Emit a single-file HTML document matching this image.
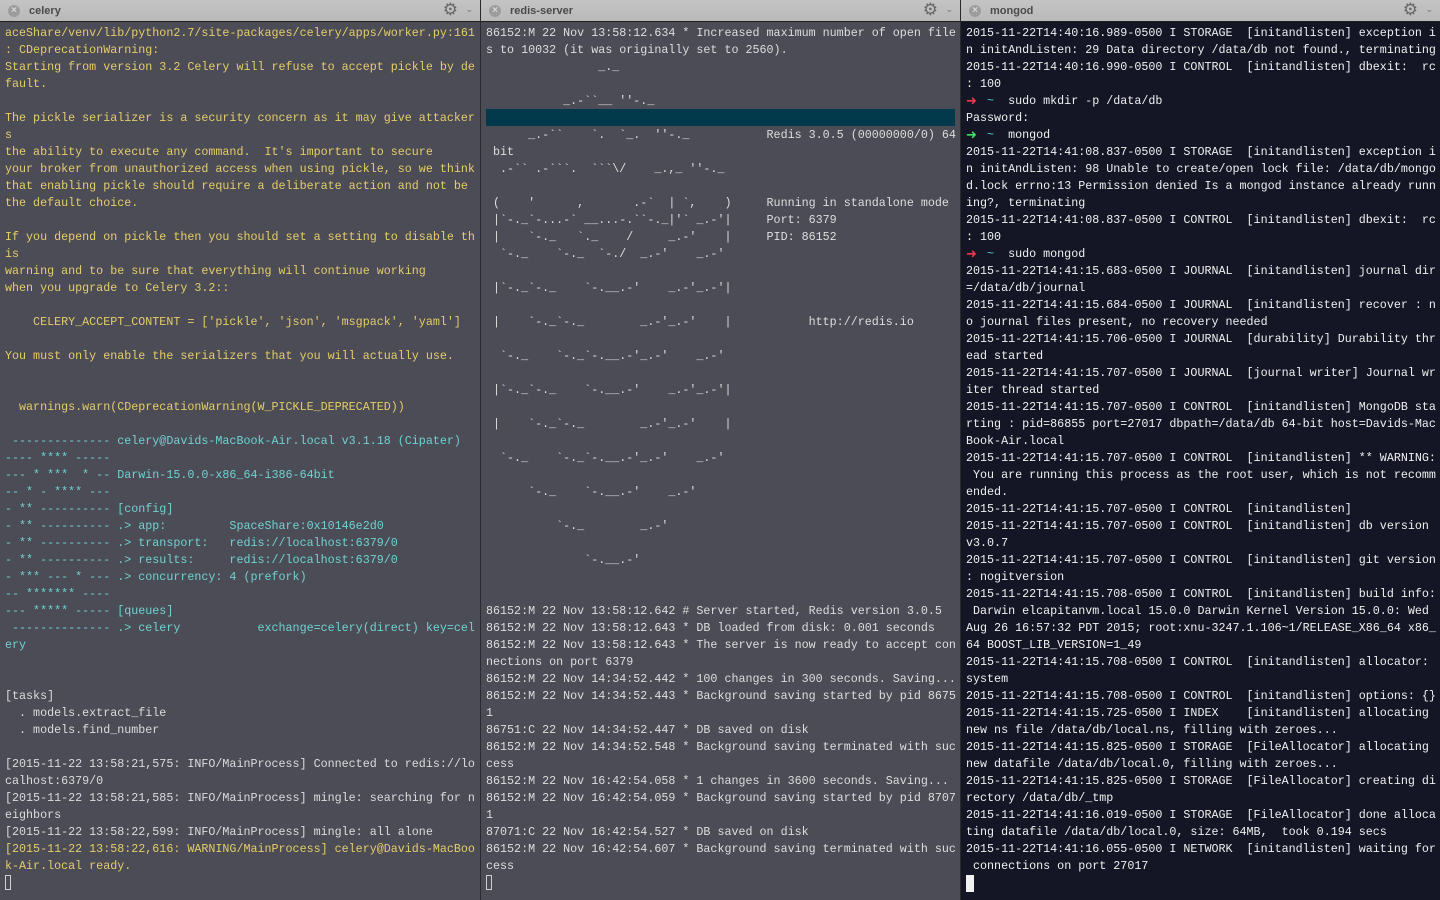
<!DOCTYPE html>
<html><head><meta charset="utf-8">
<style>
html,body{margin:0;padding:0;width:1440px;height:900px;overflow:hidden;background:#4b4c55;}
.pane{position:absolute;top:0;height:900px;overflow:hidden;}
.tab{position:absolute;left:0;right:0;top:0;height:21px;background:linear-gradient(#c4c4c4,#b9b9b9);border-bottom:1px solid #1e1e1e;}
.tab .x{position:absolute;left:8px;top:5px;width:12px;height:12px;border-radius:50%;background:#9c9c9c;color:#d8d8d8;font:bold 10px/12px "Liberation Sans",sans-serif;text-align:center;}
.tab .t{position:absolute;left:29px;top:4px;font:bold 11px/15px "Liberation Sans",sans-serif;color:#4a4a4a;}
.tab .g{position:absolute;right:22px;top:2px;font:17px/17px "DejaVu Sans",sans-serif;color:#666;}
.tab .c{position:absolute;right:7px;top:3px;font:9px/14px "DejaVu Sans",sans-serif;color:#777;}
pre{position:absolute;left:5px;top:25px;margin:0;font-family:"Liberation Mono",monospace;font-size:11.7px;line-height:17px;white-space:pre;}
.y{color:#e5cd6a}.c1{color:#6fd2d2}.w{color:#dcdcdc}
.r{color:#f4364c}.g2{color:#3ee06a}.cy{color:#45d0d0}
.ar{display:inline-block;width:7px;overflow:visible;font:bold 13px/17px "DejaVu Sans",sans-serif;vertical-align:top;}
.cur{display:inline-block;width:6px;height:15px;border:1px solid #cfcfcf;vertical-align:-3px;box-sizing:border-box;}
.curw{display:inline-block;width:8px;height:17px;background:#f2f2f2;vertical-align:-4px;}
</style></head><body>

<div class="pane" style="left:0;width:480px;background:#4b4c55;">
<div class="tab"><div class="x">×</div><div class="t">celery</div><div class="g">⚙</div><div class="c">⌄</div></div>
<pre><span class="y">aceShare/venv/lib/python2.7/site-packages/celery/apps/worker.py:161
: CDeprecationWarning:
Starting from version 3.2 Celery will refuse to accept pickle by de
fault.

The pickle serializer is a security concern as it may give attacker
s
the ability to execute any command.  It's important to secure
your broker from unauthorized access when using pickle, so we think
that enabling pickle should require a deliberate action and not be
the default choice.

If you depend on pickle then you should set a setting to disable th
is
warning and to be sure that everything will continue working
when you upgrade to Celery 3.2::

    CELERY_ACCEPT_CONTENT = ['pickle', 'json', 'msgpack', 'yaml']

You must only enable the serializers that you will actually use.


  warnings.warn(CDeprecationWarning(W_PICKLE_DEPRECATED))
</span><span class="c1">
 -------------- celery@Davids-MacBook-Air.local v3.1.18 (Cipater)
---- **** -----
--- * ***  * -- Darwin-15.0.0-x86_64-i386-64bit
-- * - **** ---
- ** ---------- [config]
- ** ---------- .> app:         SpaceShare:0x10146e2d0
- ** ---------- .> transport:   redis://localhost:6379/0
- ** ---------- .> results:     redis://localhost:6379/0
- *** --- * --- .> concurrency: 4 (prefork)
-- ******* ----
--- ***** ----- [queues]
 -------------- .> celery           exchange=celery(direct) key=cel
ery
</span><span class="w">

[tasks]
  . models.extract_file
  . models.find_number

[2015-11-22 13:58:21,575: INFO/MainProcess] Connected to redis://lo
calhost:6379/0
[2015-11-22 13:58:21,585: INFO/MainProcess] mingle: searching for n
eighbors
[2015-11-22 13:58:22,599: INFO/MainProcess] mingle: all alone
</span><span class="y">[2015-11-22 13:58:22,616: WARNING/MainProcess] celery@Davids-MacBoo
k-Air.local ready.
</span><span class="cur"></span></pre>
</div>

<div style="position:absolute;left:480px;top:0;width:1px;height:900px;background:#2a2a2e;"></div>

<div class="pane" style="left:481px;width:479px;background:#4b4c55;">
<div class="tab"><div class="x">×</div><div class="t">redis-server</div><div class="g">⚙</div><div class="c">⌄</div></div>
<div style="position:absolute;left:5px;top:109px;width:469px;height:17px;background:#023a4c;"></div>
<pre class="w" style="color:#dedede">86152:M 22 Nov 13:58:12.634 * Increased maximum number of open file
s to 10032 (it was originally set to 2560).
                _._

           _.-&#96;&#96;__ ''-._

      _.-&#96;&#96;    &#96;.  &#96;_.  ''-._           Redis 3.0.5 (00000000/0) 64
 bit
  .-&#96;&#96; .-&#96;&#96;&#96;.  &#96;&#96;&#96;\/    _.,_ ''-._

 (    '      ,       .-&#96;  | &#96;,    )     Running in standalone mode
 |&#96;-._&#96;-...-&#96; __...-.&#96;&#96;-._|'&#96; _.-'|     Port: 6379
 |    &#96;-._   &#96;._    /     _.-'    |     PID: 86152
  &#96;-._    &#96;-._  &#96;-./  _.-'    _.-'

 |&#96;-._&#96;-._    &#96;-.__.-'    _.-'_.-'|

 |    &#96;-._&#96;-._        _.-'_.-'    |           http://redis.io

  &#96;-._    &#96;-._&#96;-.__.-'_.-'    _.-'

 |&#96;-._&#96;-._    &#96;-.__.-'    _.-'_.-'|

 |    &#96;-._&#96;-._        _.-'_.-'    |

  &#96;-._    &#96;-._&#96;-.__.-'_.-'    _.-'

      &#96;-._    &#96;-.__.-'    _.-'

          &#96;-._        _.-'

              &#96;-.__.-'


86152:M 22 Nov 13:58:12.642 # Server started, Redis version 3.0.5
86152:M 22 Nov 13:58:12.643 * DB loaded from disk: 0.001 seconds
86152:M 22 Nov 13:58:12.643 * The server is now ready to accept con
nections on port 6379
86152:M 22 Nov 14:34:52.442 * 100 changes in 300 seconds. Saving...
86152:M 22 Nov 14:34:52.443 * Background saving started by pid 8675
1
86751:C 22 Nov 14:34:52.447 * DB saved on disk
86152:M 22 Nov 14:34:52.548 * Background saving terminated with suc
cess
86152:M 22 Nov 16:42:54.058 * 1 changes in 3600 seconds. Saving...
86152:M 22 Nov 16:42:54.059 * Background saving started by pid 8707
1
87071:C 22 Nov 16:42:54.527 * DB saved on disk
86152:M 22 Nov 16:42:54.607 * Background saving terminated with suc
cess
<span class="cur"></span></pre>
</div>

<div style="position:absolute;left:960px;top:0;width:1px;height:900px;background:#2a2a2e;"></div>

<div class="pane" style="left:961px;width:479px;background:#141625;">
<div class="tab"><div class="x">×</div><div class="t">mongod</div><div class="g">⚙</div><div class="c">⌄</div></div>
<pre style="color:#f0f0f0">2015-11-22T14:40:16.989-0500 I STORAGE  [initandlisten] exception i
n initAndListen: 29 Data directory /data/db not found., terminating
2015-11-22T14:40:16.990-0500 I CONTROL  [initandlisten] dbexit:  rc
: 100
<span class="ar r">➜</span>  <span class="cy">~</span>  sudo mkdir -p /data/db
Password:
<span class="ar g2">➜</span>  <span class="cy">~</span>  mongod
2015-11-22T14:41:08.837-0500 I STORAGE  [initandlisten] exception i
n initAndListen: 98 Unable to create/open lock file: /data/db/mongo
d.lock errno:13 Permission denied Is a mongod instance already runn
ing?, terminating
2015-11-22T14:41:08.837-0500 I CONTROL  [initandlisten] dbexit:  rc
: 100
<span class="ar r">➜</span>  <span class="cy">~</span>  sudo mongod
2015-11-22T14:41:15.683-0500 I JOURNAL  [initandlisten] journal dir
=/data/db/journal
2015-11-22T14:41:15.684-0500 I JOURNAL  [initandlisten] recover : n
o journal files present, no recovery needed
2015-11-22T14:41:15.706-0500 I JOURNAL  [durability] Durability thr
ead started
2015-11-22T14:41:15.707-0500 I JOURNAL  [journal writer] Journal wr
iter thread started
2015-11-22T14:41:15.707-0500 I CONTROL  [initandlisten] MongoDB sta
rting : pid=86855 port=27017 dbpath=/data/db 64-bit host=Davids-Mac
Book-Air.local
2015-11-22T14:41:15.707-0500 I CONTROL  [initandlisten] ** WARNING:
 You are running this process as the root user, which is not recomm
ended.
2015-11-22T14:41:15.707-0500 I CONTROL  [initandlisten]
2015-11-22T14:41:15.707-0500 I CONTROL  [initandlisten] db version
v3.0.7
2015-11-22T14:41:15.707-0500 I CONTROL  [initandlisten] git version
: nogitversion
2015-11-22T14:41:15.708-0500 I CONTROL  [initandlisten] build info:
 Darwin elcapitanvm.local 15.0.0 Darwin Kernel Version 15.0.0: Wed
Aug 26 16:57:32 PDT 2015; root:xnu-3247.1.106~1/RELEASE_X86_64 x86_
64 BOOST_LIB_VERSION=1_49
2015-11-22T14:41:15.708-0500 I CONTROL  [initandlisten] allocator:
system
2015-11-22T14:41:15.708-0500 I CONTROL  [initandlisten] options: {}
2015-11-22T14:41:15.725-0500 I INDEX    [initandlisten] allocating
new ns file /data/db/local.ns, filling with zeroes...
2015-11-22T14:41:15.825-0500 I STORAGE  [FileAllocator] allocating
new datafile /data/db/local.0, filling with zeroes...
2015-11-22T14:41:15.825-0500 I STORAGE  [FileAllocator] creating di
rectory /data/db/_tmp
2015-11-22T14:41:16.019-0500 I STORAGE  [FileAllocator] done alloca
ting datafile /data/db/local.0, size: 64MB,  took 0.194 secs
2015-11-22T14:41:16.055-0500 I NETWORK  [initandlisten] waiting for
 connections on port 27017
<span class="curw"></span></pre>
</div>
</body></html>
